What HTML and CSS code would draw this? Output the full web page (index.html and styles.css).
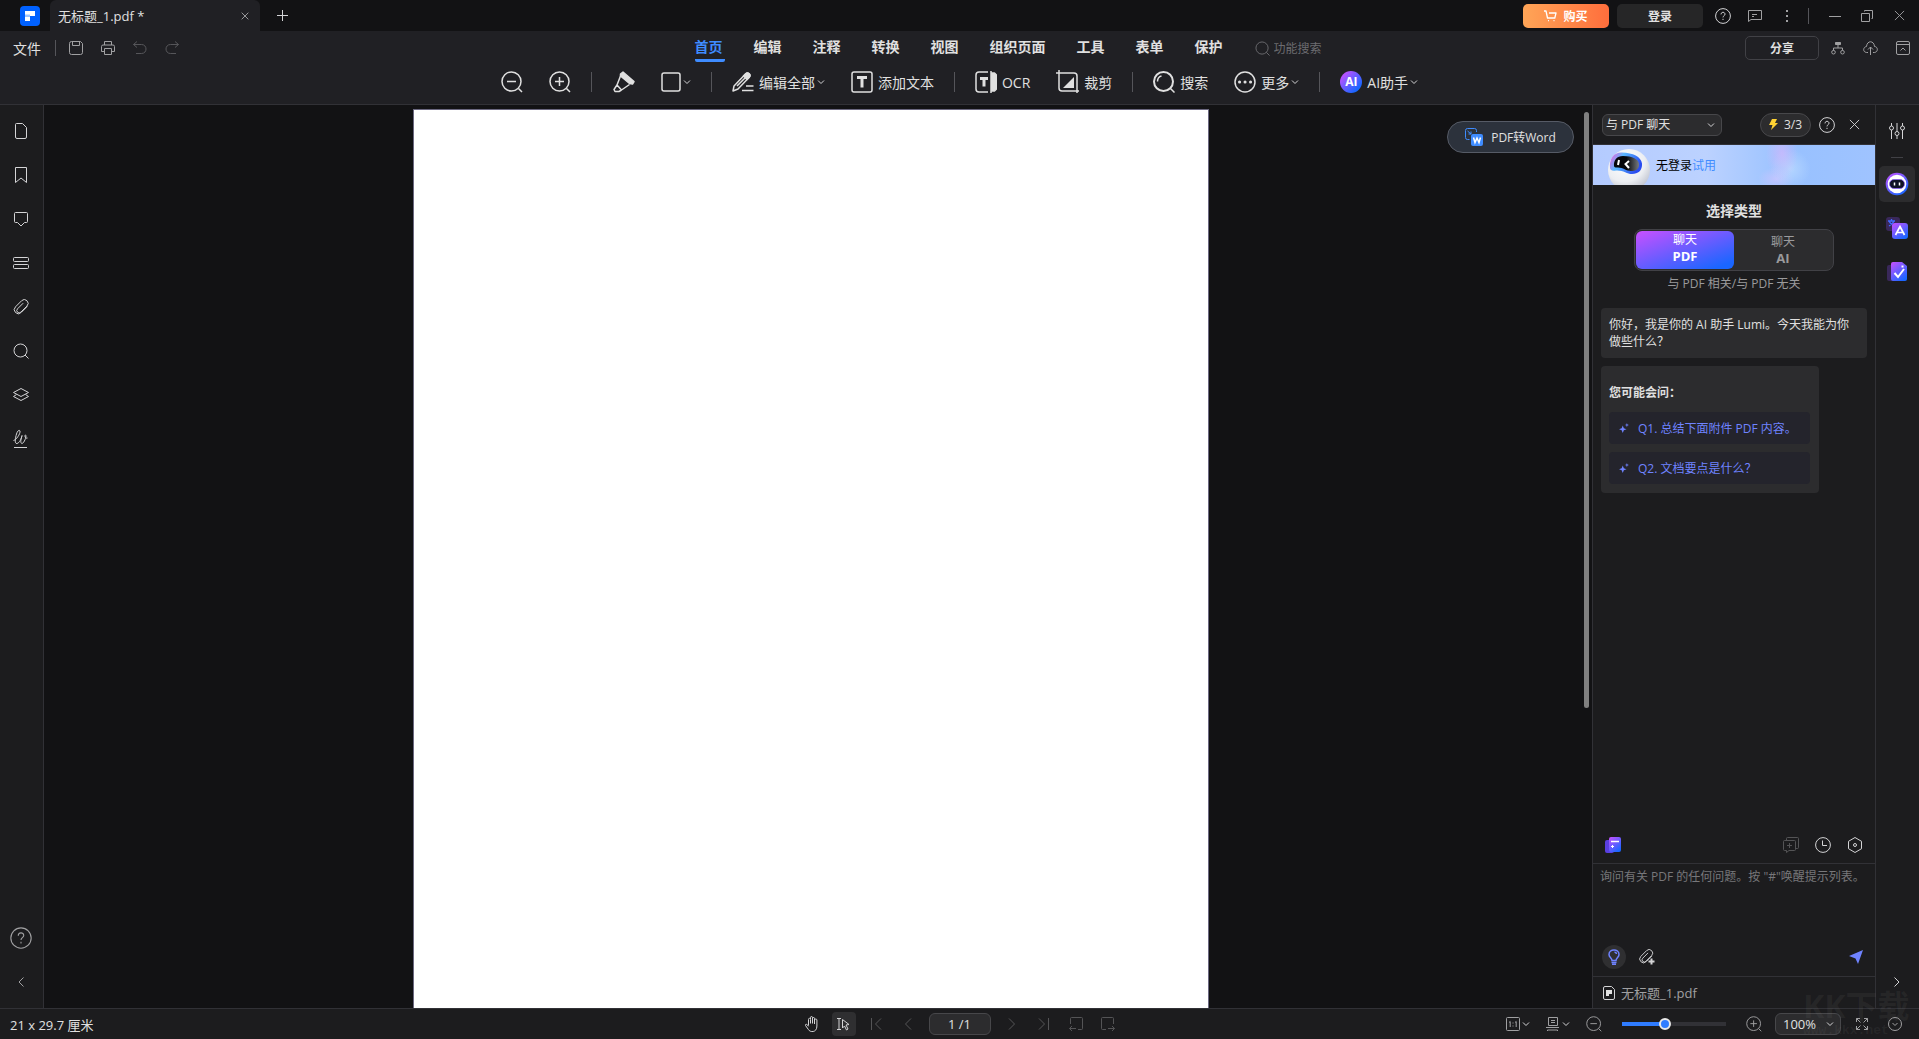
FILE: index.html
```html
<!DOCTYPE html>
<html lang="zh-CN">
<head>
  <meta charset="UTF-8" />
  <meta name="viewport" content="width=device-width, initial-scale=1.0" />
  <title>无标题_1.pdf</title>
  <link rel="stylesheet" href="styles.css">
</head>
<body>

  <!-- Shared icons -->
  <svg class="sprite" width="0" height="0" aria-hidden="true">
    <defs>
      <linearGradient id="violet" x1="0" y1="0" x2="0.7" y2="1">
        <stop offset="0" stop-color="#c950ff" />
        <stop offset="1" stop-color="#1a66ff" />
      </linearGradient>
      <radialGradient id="ball" cx="0.4" cy="0.3" r="0.8">
        <stop offset="0" stop-color="#fff" />
        <stop offset="0.6" stop-color="#eceef2" />
        <stop offset="1" stop-color="#b5b9c6" />
      </radialGradient>
      <linearGradient id="rim" x1="0" y1="0" x2="1" y2="0.4">
        <stop offset="0" stop-color="#ff5ad8" />
        <stop offset="0.4" stop-color="#5ab8ff" />
        <stop offset="1" stop-color="#2a4cf0" />
      </linearGradient>
      <linearGradient id="visor" x1="0" y1="0" x2="1" y2="0">
        <stop offset="0.5" stop-color="#05060a" />
        <stop offset="1" stop-color="#777a80" />
      </linearGradient>
    </defs>
    <symbol id="chevron" viewBox="0 0 8 6"><path d="M1 1.5l3 3 3-3" /></symbol>
    <symbol id="help" viewBox="0 0 16 16">
      <circle cx="8" cy="8" r="7.4" />
      <path d="M6 6.4c0-2.8 4-2.8 4-.2 0 1.5-2 1.6-2 3.2M8 10.8v1.2" />
    </symbol>
    <symbol id="minus-lens" viewBox="0 0 22 22">
      <circle cx="10.5" cy="10.5" r="9.5" /><path d="M6 10.5h9M17.5 17.5l3.5 3.5" />
    </symbol>
    <symbol id="plus-lens" viewBox="0 0 22 22">
      <circle cx="10.5" cy="10.5" r="9.5" /><path d="M6 10.5h9M10.5 6v9M17.5 17.5l3.5 3.5" />
    </symbol>
    <symbol id="lens" viewBox="0 0 16 16"><circle cx="7.5" cy="7.5" r="6.5" /><path d="M12 12l3.5 3.5" /></symbol>
    <symbol id="cross" viewBox="0 0 12 12"><path d="M1 1l10 10M11 1L1 11" /></symbol>
    <symbol id="clip" viewBox="0 0 24 24">
      <path stroke-width="1.5" d="M21.440 11.050l-9.190 9.190a6 6 0 0 1-8.490-8.490l9.190-9.190a5.500 5.500 0 0 1 8 8l-9.200 9.190a3.200 3.200 0 0 1-5-5l8.490-8.480" />
    </symbol>
    <symbol id="sparkle" viewBox="0 0 12 12">
      <path d="M4.500 3l1.300 3.200L9 7.500 5.800 8.800 4.500 12 3.200 8.800 0 7.500l3.200-1.300zM9.500 0l.6 1.900 1.900.6-1.900.6-.6 1.900-.6-1.900L7 2.500l1.900-.6z" />
    </symbol>
  </svg>

  <!-- Title bar with document tabs -->
  <div class="titlebar">
    <svg class="logo" width="20" height="20" viewBox="0 0 20 20">
      <rect width="20" height="20" rx="4" fill="#0061ff" />
      <path d="M5 5h10v5H5z" fill="#fff" /><path d="M5 10h5v5H5z" fill="#fff" /><path d="M5 8.500h5v2.500H5z" fill="#9cc4ff" />
    </svg>
    <div class="doc-tab">
      <span>无标题_1.pdf *</span>
      <button class="icon-btn" aria-label="关闭标签"><svg class="ic" width="8" height="8"><use href="#cross" /></svg></button>
    </div>
    <button class="icon-btn new-tab" aria-label="新建标签"><svg class="ic" width="11" height="11" viewBox="0 0 11 11"><path d="M5.500 0v11M0 5.500h11" /></svg></button>
    <div class="window-tools">
      <button class="buy">
        <svg class="ic" width="13" height="12" viewBox="0 0 13 12"><path d="M0 1h2l1.500 7h7.300L12 3H5M4 10.700h1M9.500 10.700h1" /></svg>
        购买
      </button>
      <button class="login">登录</button>
      <button class="icon-btn" aria-label="帮助"><svg class="ic" width="16" height="16"><use href="#help" /></svg></button>
      <button class="icon-btn" aria-label="反馈"><svg class="ic dim" width="16" height="14" viewBox="0 0 16 14"><path d="M1.500 12.500v-11h13v9H4zM5 5.500h5M5 7.500h2" /></svg></button>
      <button class="icon-btn" aria-label="菜单"><svg class="dots" width="16" height="14" viewBox="0 0 16 14"><path d="M7 1h2v2H7zM7 6h2v2H7zM7 11h2v2H7z" /></svg></button>
      <span class="divider"></span>
      <button class="icon-btn" aria-label="最小化"><svg class="ic dim" width="12" height="12" viewBox="0 0 12 12"><path d="M0 6.500h12" /></svg></button>
      <button class="icon-btn" aria-label="还原"><svg class="ic dim" width="12" height="12" viewBox="0 0 12 12"><path d="M.5 3.500h8v8h-8zM3.500 1.500v-1h8v8h-1" /></svg></button>
      <button class="icon-btn" aria-label="关闭"><svg class="ic dim" width="11" height="11"><use href="#cross" /></svg></button>
    </div>
  </div>

  <!-- Menu row and ribbon -->
  <header class="header">
    <div class="menu-row">
      <div class="quick">
        <button class="file-btn">文件</button>
        <span class="divider"></span>
        <button class="icon-btn" aria-label="保存"><svg class="ic dim" width="14" height="14" viewBox="0 0 14 14"><path d="M2.500.5h9l2 2v9q0 2-2 2h-9q-2 0-2-2v-9q0-2 2-2zM3.500.5v4h7v-4" /></svg></button>
        <button class="icon-btn" aria-label="打印"><svg class="ic dim" width="14" height="14" viewBox="0 0 14 14"><path d="M3.500 4V.5h7V4M3.500 10.500h-3v-5q0-1.500 1.500-1.500h10q1.500 0 1.500 1.500v5h-3M3.500 7.500h7v6h-7z" /></svg></button>
        <button class="icon-btn" aria-label="撤销" disabled><svg class="ic" width="14" height="14" viewBox="0 0 14 14"><path d="M4 .5L.5 3.500 4 6.500M.5 3.500h8c6 0 6 9 0 9H3" /></svg></button>
        <button class="icon-btn" aria-label="重做" disabled><svg class="ic" width="14" height="14" viewBox="0 0 14 14"><path d="M10 .5l3.500 3-3.500 3M13.500 3.500h-8c-6 0-6 9 0 9H11" /></svg></button>
      </div>
      <nav class="menu">
        <a class="active" href="#home">首页</a>
        <a href="#edit">编辑</a>
        <a href="#comment">注释</a>
        <a href="#convert">转换</a>
        <a href="#view">视图</a>
        <a href="#organize">组织页面</a>
        <a href="#tools">工具</a>
        <a href="#form">表单</a>
        <a href="#protect">保护</a>
      </nav>
      <div class="menu-end">
        <label class="feature-search">
          <svg class="ic" width="15" height="15"><use href="#lens" /></svg>
          <input type="text" placeholder="功能搜索" aria-label="功能搜索">
        </label>
        <button class="share">分享</button>
        <button class="icon-btn" aria-label="组织结构"><svg class="ic dim" width="14" height="14" viewBox="0 0 14 14"><path fill="#a0a0a2" d="M4.500 1.500h5v2h-5z" /><path d="M7 4v3M2.500 9.500V7h9v2.500" /><circle cx="2.500" cy="11.200" r="1.800" /><circle cx="11.500" cy="11.200" r="1.800" /></svg></button>
        <button class="icon-btn" aria-label="上传到云"><svg class="ic dim" width="15" height="14" viewBox="0 0 15 14"><path d="M5 11.500H3.500c-4-.5-3.500-5.500 0-6C4-.8 11-.8 11.500 5.500c3.500 0 4 5.500 0 6H10M7.500 14V6M5 8.500L7.500 6 10 8.500" /></svg></button>
        <button class="icon-btn" aria-label="收起功能区"><svg class="ic dim" width="14" height="14" viewBox="0 0 14 14"><rect x=".5" y=".5" width="13" height="13" rx="1.500" /><path d="M.5 3.500h13M4.500 9.500L7 7l2.500 2.500" /></svg></button>
      </div>
    </div>

    <div class="ribbon">
      <button class="tool" aria-label="缩小"><svg class="ic bold" width="22" height="22"><use href="#minus-lens" /></svg></button>
      <button class="tool" aria-label="放大"><svg class="ic bold" width="22" height="22"><use href="#plus-lens" /></svg></button>
      <span class="divider"></span>
      <button class="tool" aria-label="高亮">
        <svg class="ic bold" width="23" height="22" viewBox="0 0 23 22"><path fill="#e0e0e0" d="M11 1l11 9.500-1.500 2.500-3-.5L8.500 5V3z" /><path d="M8.500 5L5 14l4.500 5 8-5.500M5 14l-3 4.500 1 2h4L9.500 19" /></svg>
      </button>
      <button class="tool" aria-label="形状">
        <svg class="ic bold" width="20" height="20" viewBox="0 0 20 20"><rect x="1" y="1" width="18" height="18" rx="2" /></svg>
        <svg class="ic chev" width="8" height="6"><use href="#chevron" /></svg>
      </button>
      <span class="divider"></span>
      <button class="tool">
        <svg class="ic bold" width="22" height="20" viewBox="0 0 22 20"><path d="M2 14L13.500 2c2.500-2.500 6 .8 3.500 3.500L6 17l-5 2z" /><path fill="#e0e0e0" d="M11.500 4l2-2c2.500-2.500 6 .8 3.500 3.500l-2 2z" /><path d="M5 14l8-8M14 14h7.500M10 18.500h11.500" /></svg>
        编辑全部
        <svg class="ic chev" width="8" height="6"><use href="#chevron" /></svg>
      </button>
      <button class="tool">
        <svg class="ic bold" width="22" height="22" viewBox="0 0 22 22"><rect x="1" y="1" width="20" height="20" rx="2" /><path class="thick" d="M6 6.500h10M11 6.500v10" /></svg>
        添加文本
      </button>
      <span class="divider"></span>
      <button class="tool">
        <svg class="ic bold" width="22" height="24" viewBox="0 0 22 24"><path d="M13 2H4Q1 2 1 5v14q0 3 3 3h9" /><path class="thick" d="M5 8.500h8M9 8.500v8" /><path fill="#e0e0e0" d="M16 1v22M17 3h2.500l2 2v14l-2 2H17z" /></svg>
        OCR
      </button>
      <button class="tool">
        <svg class="ic bold" width="23" height="24" viewBox="0 0 23 24"><path d="M0 3h18q3 0 3 3v17M3 0v18q0 3 3 3h17" /><path class="solid" d="M18 7v11H7z" /></svg>
        裁剪
      </button>
      <span class="divider"></span>
      <button class="tool">
        <svg class="ic bold" width="22" height="22" viewBox="0 0 22 22"><circle cx="10.500" cy="10.500" r="9.500" stroke-width="2" /><path d="M4.500 10.500c0-3 2-5 4-5.500M17.500 17.500l4 4" /></svg>
        搜索
      </button>
      <button class="tool">
        <svg class="ic bold" width="22" height="22" viewBox="0 0 22 22"><circle cx="11" cy="11" r="10" /><path class="dots-row" d="M5.500 11h.1M11 11h.1M16.500 11h.1" /></svg>
        更多
        <svg class="ic chev" width="8" height="6"><use href="#chevron" /></svg>
      </button>
      <span class="divider"></span>
      <button class="tool">
        <span class="ai-badge">AI</span>
        AI助手
        <svg class="ic chev" width="8" height="6"><use href="#chevron" /></svg>
      </button>
    </div>
  </header>

  <div class="workspace">
    <!-- Left navigation rail -->
    <aside class="rail left-rail">
      <button class="icon-btn" aria-label="缩略图"><svg class="ic" width="16" height="16" viewBox="0 0 16 16"><path d="M3.500.5h6l4 4v9.500q0 1.500-1.500 1.500H4q-1.500 0-1.500-1.500V1.500q0-1 1-1z" /></svg></button>
      <button class="icon-btn" aria-label="书签"><svg class="ic" width="16" height="16" viewBox="0 0 16 16"><path d="M2.500 15.500v-15h11v15L8 11z" /></svg></button>
      <button class="icon-btn" aria-label="注释"><svg class="ic" width="16" height="16" viewBox="0 0 16 16"><path d="M2.500 1.500h11q1 0 1 1v8q0 1-1 1h-2L8 15l-3.500-3.500h-2q-1 0-1-1v-8q0-1 1-1z" /></svg></button>
      <button class="icon-btn" aria-label="字段"><svg class="ic" width="16" height="16" viewBox="0 0 16 16"><rect x=".5" y="2.500" width="15" height="4" rx="1" /><rect x=".5" y="9.500" width="15" height="4" rx="1" /></svg></button>
      <button class="icon-btn" aria-label="附件"><svg class="ic" width="16" height="16"><use href="#clip" /></svg></button>
      <button class="icon-btn" aria-label="搜索"><svg class="ic" width="16" height="16"><use href="#lens" /></svg></button>
      <button class="icon-btn" aria-label="图层"><svg class="ic" width="16" height="16" viewBox="0 0 16 16"><path d="M8 1.500l7.500 4L8 9.500l-7.500-4zM3.500 7.500l-3 2 7.500 4 7.500-4-3-2" /></svg></button>
      <button class="icon-btn" aria-label="签名"><svg class="ic" width="16" height="20" viewBox="0 0 16 20"><path d="M.5 11.500C3 11 7.500 5 7 2 6.500.5 4.500 1.500 3.500 5 2 10 1.500 15 4 14.500c2.500-.5 4.500-5 5-8-1 3.500-2 7.500-.2 8 1.500.3 4-4.500 4.200-7.500.2-1.500-1.500-1-1 .5.300 1.500 1.500 2 2.500 1.500M1 18.500h13" /></svg></button>
      <span class="spacer"></span>
      <button class="icon-btn large" aria-label="帮助"><svg class="ic dim" width="22" height="22"><use href="#help" /></svg></button>
      <button class="icon-btn" aria-label="收起"><svg class="ic dim" width="6" height="10" viewBox="0 0 6 10"><path d="M5.500.5L1 5l4.500 4.500" /></svg></button>
    </aside>

    <!-- Document canvas -->
    <main class="canvas">
      <div class="page"></div>
      <button class="to-word">
        <svg width="18" height="18" viewBox="0 0 18 18"><path d="M4.500 11.500h-2q-2 0-2-2v-7q0-2 2-2h7q2 0 2 2v1.500M2.500 3l3.500 3M6 3.500V6H3.500" fill="none" stroke="#3f8cff" /><rect x="6" y="6" width="12" height="12" rx="2" fill="#3f8cff" /><path d="M8.500 9.500l1.500 5 2-4.500 2 4.500 1.500-5" fill="none" stroke="#fff" stroke-width="1.500" /></svg>
        PDF转Word
      </button>
      <div class="scroll-thumb"></div>
    </main>

    <!-- AI chat panel -->
    <section class="chat">
      <div class="chat-head">
        <div class="select-wrap mode">
          <select aria-label="聊天模式"><option>与 PDF 聊天</option></select>
          <svg class="ic" width="8" height="6"><use href="#chevron" /></svg>
        </div>
        <span class="quota">
          <svg width="9" height="11" viewBox="0 0 9 11"><path d="M3 0h5L6 4h3L2 11l1.500-5H0z" fill="#ffd233" /></svg>
          3/3
        </span>
        <button class="icon-btn" aria-label="帮助"><svg class="ic" width="16" height="16"><use href="#help" /></svg></button>
        <button class="icon-btn" aria-label="关闭面板"><svg class="ic" width="11" height="11"><use href="#cross" /></svg></button>
      </div>

      <div class="banner">
        <svg class="bot" width="44" height="36" viewBox="0 0 44 36">
          <circle cx="23" cy="21" r="21" fill="url(#ball)" />
          <path d="M4 19C3 10 8 3 16 3.500c11 .5 19 4 20 11 .5 7-4 10.500-10 10.500-5 0-9-4-16-3.500-4 .5-5.500 0-6-2.500z" fill="url(#rim)" />
          <path d="M8 17C7.500 11 11 7 17 7c9 0 16 3 16 8.500 0 5-3.500 6.500-8 6.500s-8-3.500-13-3.500c-2.500 0-3.700.2-4-1.500z" fill="url(#visor)" />
          <path d="M13 11l-1 5M23 12l-3.500 3 3.500 4" fill="none" stroke="#fff" stroke-width="2" />
        </svg>
        <span>无登录<a href="#trial">试用</a></span>
      </div>

      <div class="chat-body">
        <h2>选择类型</h2>
        <div class="segment">
          <button class="on">聊天<b>PDF</b></button>
          <button>聊天<b>AI</b></button>
        </div>
        <p class="hint">与 PDF 相关/与 PDF 无关</p>

        <p class="bubble">你好，我是你的 AI 助手 Lumi。今天我能为你做些什么？</p>

        <div class="ask">
          <h3>您可能会问：</h3>
          <button><svg width="10" height="12"><use href="#sparkle" /></svg>Q1. 总结下面附件 PDF 内容。</button>
          <button><svg width="10" height="12"><use href="#sparkle" /></svg>Q2. 文档要点是什么？</button>
        </div>
      </div>

      <div class="chat-tools">
        <button class="icon-btn library" aria-label="提示库"><svg width="16" height="16" viewBox="0 0 16 16"><rect y="3" width="9" height="13" rx="2" fill="#5a3fe0" /><rect x="4" width="12" height="15" rx="2" fill="url(#violet)" /><path d="M6 4.500h8" stroke="#fff" stroke-width="1.500" /><path d="M7.500 8v3M6 9.500h3" stroke="#fff" /></svg></button>
        <button class="icon-btn" aria-label="新对话" disabled><svg class="ic" width="16" height="16" viewBox="0 0 16 16"><path d="M3.500 3V1.500q0-1 1-1h10q1 0 1 1v9q0 1-1 1h-1.500M1.500 3.500h10q1 0 1 1v8q0 1-1 1H6L3.500 15.500v-2h-2q-1 0-1-1v-8q0-1 1-1zM6.500 6v5M4 8.500h5" /></svg></button>
        <button class="icon-btn" aria-label="历史"><svg class="ic" width="16" height="16" viewBox="0 0 16 16"><circle cx="8" cy="8" r="7.400" /><path d="M7.500 3.500v5H12" /></svg></button>
        <button class="icon-btn" aria-label="设置"><svg class="ic" width="16" height="16" viewBox="0 0 16 16"><path d="M8 .5l6.500 3.800v7.400L8 15.500l-6.500-3.800V4.300z" /><circle cx="8" cy="8" r="1.500" /></svg></button>
      </div>

      <div class="prompt">
        <textarea aria-label="提问" placeholder="询问有关 PDF 的任何问题。按 &quot;#&quot;唤醒提示列表。"></textarea>
        <div class="prompt-tools">
          <button class="icon-btn idea" aria-label="灵感"><svg width="12" height="16" viewBox="0 0 12 16" fill="none" stroke="#6f83ff" stroke-width="1.500"><path d="M4 11.500C4 9 1 8.500 1 5.500c0-6 10-6 10 0 0 3-3 3.500-3 6zM3.500 13.500l5 0M4 15.200h4M6.500 3q2 .3 2 2" /></svg></button>
          <button class="icon-btn" aria-label="添加附件"><svg class="ic" width="17" height="16" viewBox="0 0 17 16"><use href="#clip" width="16" height="15" /><path class="plus" d="M13.500 9.500v6M10.500 12.500h6" /></svg></button>
          <button class="icon-btn send" aria-label="发送"><svg width="14" height="14" viewBox="0 0 14 14"><path d="M14 0L9 14 6.500 8.500 0 6z" fill="#6f83ff" /></svg></button>
        </div>
      </div>

      <div class="chat-file">
        <svg class="ic" width="12" height="14" viewBox="0 0 12 14"><path d="M2 .5h6.500l3 3V12q0 1.500-1.500 1.500H2Q.5 13.500.5 12V2Q.5.5 2 .5z" /><path class="solid" d="M3 4h6v4H6v2H3z" /></svg>
        无标题_1.pdf
      </div>
    </section>

    <!-- Right rail -->
    <aside class="rail right-rail">
      <button class="icon-btn" aria-label="属性"><svg class="ic" width="16" height="16" viewBox="0 0 16 16"><path d="M2.500 0v3M2.500 7v9M8 0v8.500M8 12.500V16M13.500 0v3M13.500 7v9" /><circle cx="2.500" cy="5" r="2" /><circle cx="8" cy="10.500" r="2" /><circle cx="13.500" cy="5" r="2" /></svg></button>
      <hr>
      <button class="icon-btn current" aria-label="AI 助手"><svg width="24" height="24" viewBox="0 0 24 24"><circle cx="12" cy="12" r="11.300" fill="url(#violet)" /><circle cx="12" cy="12" r="9.300" fill="#fff" /><rect x="4.500" y="7.500" width="15" height="9" rx="4.500" fill="#101225" stroke="#8a5cff" stroke-width=".7" /><path d="M9.500 10.500v3M14.500 10.500v3" stroke="#fff" stroke-width="1.500" /></svg></button>
      <button class="icon-btn" aria-label="翻译"><svg width="22" height="22" viewBox="0 0 22 22"><rect width="14" height="14" rx="3" fill="#39285a" /><path d="M2 4h7M5.500 2v2M8 4c-1 3-3 4-5 5M3 4c1 3 3 4 5 5" fill="none" stroke="#406bff" stroke-width="1.300" /><rect x="6" y="6" width="16" height="16" rx="3" fill="url(#violet)" /><path d="M9.500 18L14 9.500 18.500 18M11 15.500h6" fill="none" stroke="#fff" stroke-width="1.700" /></svg></button>
      <button class="icon-btn" aria-label="校对"><svg width="20" height="20" viewBox="0 0 20 20"><rect y="3" width="10" height="16" rx="2" fill="#39285a" /><path d="M6 0h9l5 4v13q0 2-2 2H6q-2 0-2-2V2q0-2 2-2z" fill="url(#violet)" /><path d="M7.500 11l3.500 4 6-8M14.500 4.500h2" fill="none" stroke="#fff" stroke-width="2" /></svg></button>
      <span class="spacer"></span>
      <button class="icon-btn" aria-label="展开"><svg class="ic" width="6" height="10" viewBox="0 0 6 10"><path d="M.5.5L5 5 .5 9.500" /></svg></button>
    </aside>
  </div>

  <!-- Status bar -->
  <footer class="status">
    <span class="size">21 x 29.7 厘米</span>
    <div class="pager">
      <button class="icon-btn" aria-label="手形工具"><svg class="ic" width="14" height="16" viewBox="0 0 14 16"><path d="M3.500 9.500V3.500q0-1.200 1-1.200t1 1.200V7.500M5.500 3V1.700q0-1.200 1-1.200t1 1.200V7.500M7.500 2.500q0-1 1-1t1 1V8M9.500 4q0-1 1.200-1t1.200 1v6c0 7-7 6.500-8.500 3.500L.5 9.500c-.5-1.500 1.500-2 3 .8" /></svg></button>
      <button class="icon-btn picked" aria-label="选择工具"><svg class="ic" width="13" height="14" viewBox="0 0 13 14"><path d="M0 1.500h4M2 1.500v11M0 12.500h4" /><path d="M5.500 2.500l6.500 5-3 .5 2 4-1.500 1-2-4-2 2z" /></svg></button>
      <button class="icon-btn" aria-label="首页" disabled><svg class="ic" width="12" height="12" viewBox="0 0 12 12"><path d="M1.500 0v12M11 .5L5.500 6l5.500 5.500" /></svg></button>
      <button class="icon-btn" aria-label="上一页" disabled><svg class="ic" width="12" height="12" viewBox="0 0 12 12"><path d="M9 .5L3.500 6 9 11.500" /></svg></button>
      <input class="page-no" type="text" value="1 /1" aria-label="页码">
      <button class="icon-btn" aria-label="下一页" disabled><svg class="ic" width="12" height="12" viewBox="0 0 12 12"><path d="M3 .5L8.500 6 3 11.500" /></svg></button>
      <button class="icon-btn" aria-label="末页" disabled><svg class="ic" width="12" height="12" viewBox="0 0 12 12"><path d="M10.500 0v12M1 .5L6.500 6 1 11.500" /></svg></button>
      <button class="icon-btn" aria-label="上一视图" disabled><svg class="ic" width="14" height="14" viewBox="0 0 14 14"><path d="M1.500 7V1.500q0-1 1-1h10q1 0 1 1v10q0 1-1 1H9M7 11.500H.5M3 9L.5 11.500 3 14" /></svg></button>
      <button class="icon-btn" aria-label="下一视图" disabled><svg class="ic" width="14" height="14" viewBox="0 0 14 14"><path d="M12.500 7V1.500q0-1-1-1h-10q-1 0-1 1v10q0 1 1 1H5M7 11.500h6.500M11 9l2.500 2.500L11 14" /></svg></button>
    </div>
    <div class="zoom">
      <button class="icon-btn" aria-label="实际大小">
        <svg class="ic dim" width="14" height="14" viewBox="0 0 14 14"><rect x=".5" y=".5" width="13" height="13" rx="1" /><path d="M3 5.500l1.200-1V10M9 5.500l1.200-1V10M7 5.500v1M7 8.500v1" /></svg>
        <svg class="ic" width="8" height="6"><use href="#chevron" /></svg>
      </button>
      <button class="icon-btn" aria-label="页面布局">
        <svg class="ic dim" width="14" height="14" viewBox="0 0 14 14"><path d="M2.500.5h9v8h-9zM5 3.500h4M5 5.500h4M0 10.500h13M1.500 14v-1h10v1" /></svg>
        <svg class="ic" width="8" height="6"><use href="#chevron" /></svg>
      </button>
      <button class="icon-btn lens" aria-label="缩小"><svg class="ic dim" width="16" height="16"><use href="#minus-lens" /></svg></button>
      <input class="slider" type="range" min="0" max="100" value="40" aria-label="缩放">
      <button class="icon-btn lens" aria-label="放大"><svg class="ic dim" width="16" height="16"><use href="#plus-lens" /></svg></button>
      <div class="select-wrap percent">
        <select aria-label="缩放比例"><option>100%</option></select>
        <svg class="ic" width="8" height="6"><use href="#chevron" /></svg>
      </div>
      <button class="icon-btn" aria-label="全屏"><svg class="ic dim" width="12" height="12" viewBox="0 0 12 12"><path d="M4 .5H.5V4M.5.5L4.500 4.500M8 .5h3.500V4M11.500.5L7.500 4.500M4 11.500H.5V8M.5 11.500L4.500 7.500M8 11.500h3.500V8M11.500 11.500L7.500 7.500" /></svg></button>
      <button class="icon-btn" aria-label="更多选项"><svg class="ic dim" width="14" height="14" viewBox="0 0 14 14"><circle cx="7" cy="7" r="6.500" /><path d="M4.500 6L7 8.500 9.500 6" /></svg></button>
    </div>
  </footer>

  <div class="watermark"><span class="mark">KK下载</span><span class="site">www.kkx.net</span></div>

</body>
</html>
```

FILE: styles.css
```css
/* Global reset and font settings */
* { box-sizing: border-box; }
body, html {
  margin: 0;
  padding: 0;
  height: 100%;
}
body {
  display: flex;
  flex-direction: column;
  overflow: hidden;
  font-family: "Open Sans", "Noto Sans CJK SC", sans-serif;
  font-size: 12px;
  background-color: #121214;
  color: #e0e0e0;
}
button, input, select, textarea {
  font-family: inherit;
  font-size: inherit;
  color: inherit;
  margin: 0;
}
button {
  padding: 0;
  border: none;
  background: none;
  white-space: nowrap;
}
svg { display: block; flex: none; }
a { text-decoration: none; color: inherit; }

/* Icons */
.sprite { position: absolute; }
.ic {
  fill: none;
  stroke: #d4d4d6;
  stroke-linejoin: round;
}
.ic.dim { stroke: #a0a0a2; }
.ic.bold { stroke: #e0e0e0; stroke-width: 1.5; }
.ic .thick { stroke-width: 3; stroke-linejoin: miter; }
.ic .solid { fill: #e0e0e0; stroke: none; }
.ic .dots-row { stroke-width: 3; stroke-linecap: round; }
.ic .plus { stroke-width: 2; }
.dots { fill: #a0a0a2; }
.icon-btn {
  display: flex;
  align-items: center;
  justify-content: center;
  gap: 2px;
}
.icon-btn:disabled { opacity: 0.3; }
.divider {
  width: 1px;
  height: 16px;
  background-color: #55555a;
}
.spacer { flex: 1; }

/* Title bar */
.titlebar {
  display: flex;
  align-items: center;
  height: 31px;
  padding-left: 20px;
}
.doc-tab {
  display: flex;
  align-items: center;
  justify-content: space-between;
  width: 210px;
  height: 31px;
  margin-left: 10px;
  padding: 0 11px 0 8px;
  border-radius: 6px 6px 0 0;
  background-color: #202024;
  font-size: 13px;
}
.new-tab { margin-left: 17px; }
.window-tools {
  display: flex;
  align-items: center;
  gap: 16px;
  margin-left: auto;
  padding-right: 12px;
}
.window-tools .icon-btn { width: 16px; }
.window-tools .divider { margin: 0 2px 0 -3px; }
.buy, .login {
  display: flex;
  align-items: center;
  justify-content: center;
  gap: 6px;
  width: 86px;
  height: 24px;
  border-radius: 5px;
  font-weight: bold;
  background-color: #262627;
}
.buy {
  margin-right: -8px;
  color: #fff;
  background: linear-gradient(90deg, #ffa557, #ff6e3c);
}
.buy .ic { stroke: #fff; stroke-width: 1.3; }
.login { margin-right: -4px; }

/* Menu row */
.header {
  height: 74px;
  border-bottom: 1px solid #313136;
  background-color: #202024;
}
.menu-row {
  display: grid;
  grid-template-columns: 1fr auto 1fr;
  align-items: center;
  height: 34px;
}
.quick {
  display: flex;
  align-items: center;
  gap: 18px;
  padding-left: 13px;
}
.file-btn { font-size: 14px; }
.quick .divider { margin: 0 -5px; }
.quick .file-btn { margin-right: 1px; }
.menu {
  display: flex;
  gap: 29px;
  font-size: 14px;
  font-weight: bold;
}
.menu a {
  height: 28px;
  padding-right: 2px;
  line-height: 26px;
  border-bottom: 3px solid transparent;
}
.menu .active { color: #3f8cff; border-color: #3f8cff; border-radius: 2px; }
.menu-end {
  display: flex;
  align-items: center;
  gap: 18px;
  padding: 0 9px 0 30px;
}
.feature-search {
  display: flex;
  align-items: center;
  gap: 4px;
  margin-right: auto;
}
.feature-search .ic { stroke: #6c6c70; }
.feature-search input {
  width: 120px;
  padding: 0;
  border: none;
  background: none;
}
.feature-search input::placeholder { color: #6c6c70; }
.share {
  width: 74px;
  height: 24px;
  margin-right: -6px;
  border: 1px solid #414146;
  border-radius: 5px;
  font-weight: bold;
}

/* Ribbon */
.ribbon {
  display: flex;
  align-items: center;
  justify-content: center;
  gap: 26px;
  height: 34px;
}
.ribbon .divider { height: 20px; margin: 0 -6px; }
.tool {
  display: flex;
  align-items: center;
  gap: 5px;
  font-size: 14px;
}
.tool .chev { margin-left: -3px; }
.ai-badge {
  width: 22px;
  height: 22px;
  border-radius: 50%;
  background: linear-gradient(135deg, #c950ff 10%, #1a66ff 80%);
  color: #fff;
  font-size: 12px;
  font-weight: bold;
  line-height: 22px;
}

/* Workspace */
.workspace {
  flex: 1;
  display: flex;
  min-height: 0;
}
.rail {
  display: flex;
  flex-direction: column;
  align-items: center;
  width: 44px;
  background-color: #1c1c1e;
}
.left-rail {
  padding: 4px 1px 4px 0;
  border-right: 1px solid #313136;
}
.left-rail .icon-btn { height: 44px; }
.left-rail .large .ic { stroke-width: 0.8; }
.canvas {
  flex: 1;
  position: relative;
  display: flex;
  justify-content: center;
  padding: 4px 14px 0 0;
  overflow: hidden;
}
.page {
  width: 796px;
  height: 1123px;
  border: 1px solid #6b6880;
  background-color: #fff;
}
.to-word {
  position: absolute;
  top: 16px;
  right: 18px;
  display: flex;
  align-items: center;
  justify-content: center;
  gap: 8px;
  width: 127px;
  height: 32px;
  border: 1px solid #565b66;
  border-radius: 16px;
  background-color: #2c323c;
}
.scroll-thumb {
  position: absolute;
  top: 7px;
  right: 3px;
  width: 5px;
  height: 66%;
  border-radius: 3px;
  background-color: #808080;
}

/* Chat panel */
.chat {
  display: flex;
  flex-direction: column;
  width: 284px;
  border: solid #313136;
  border-width: 0 1px;
  background-color: #1c1c1e;
}
.chat-head {
  display: flex;
  align-items: center;
  gap: 8px;
  height: 40px;
  padding: 0 15px 0 9px;
  border-bottom: 1px solid #313136;
}
.chat-head .icon-btn:last-child { margin-left: 6px; }
.select-wrap {
  position: relative;
  height: 22px;
}
.select-wrap select {
  appearance: none;
  width: 100%;
  height: 100%;
  padding: 0 3px;
  border: 1px solid #47474a;
  border-radius: 6px;
  background-color: #2c2c2e;
}
.select-wrap .ic {
  position: absolute;
  top: 8px;
  right: 7px;
  pointer-events: none;
}
.mode { width: 120px; margin-right: auto; }
.quota {
  display: flex;
  align-items: center;
  justify-content: center;
  gap: 6px;
  width: 51px;
  height: 24px;
  border: 1px solid #47474a;
  border-radius: 12px;
  background-color: #2c2c2e;
}
.banner {
  position: relative;
  height: 40px;
  padding-left: 63px;
  overflow: hidden;
  line-height: 42px;
  color: #000;
  background:
    radial-gradient(ellipse 16px 26px at 67% 20%, #dcb4fb99, transparent),
    radial-gradient(ellipse 20px 20px at 70% 60%, #c6e2ff99, transparent),
    radial-gradient(ellipse 18px 12px at 65% 85%, #d9c4ff99, transparent),
    linear-gradient(90deg, #b4cbff, #bcd2ff 40%, #98c1ff 70%, #9fc3ff);
}
.banner a { color: #3f8cff; }
.bot { position: absolute; top: 4px; left: 13px; }
.chat-body {
  flex: 1;
  padding: 16px 8px 0;
}
.chat-body h2 {
  margin: 0 0 8px;
  font-size: 14px;
  line-height: 20px;
  text-align: center;
}
.segment {
  display: flex;
  width: 200px;
  height: 42px;
  margin: 0 auto;
  padding: 1px;
  border: 1px solid #414146;
  border-radius: 8px;
  background-color: #2c2c2e;
}
.segment button {
  flex: 1;
  border-radius: 6px;
  line-height: 17px;
  color: #9a9a9c;
}
.segment .on {
  padding-bottom: 4px;
  color: #fff;
  background: linear-gradient(160deg, #c950ff, #1a66ff 90%);
}
.segment b { display: block; font-size: 13px; }
.hint {
  margin: 5px 0 16px;
  line-height: 16px;
  text-align: center;
  color: #9a9a9c;
}
.bubble {
  margin: 0 0 8px;
  padding: 8px 7px 8px 8px;
  border-radius: 4px;
  line-height: 17px;
  background-color: #2c2c2e;
}
.ask {
  display: flex;
  flex-direction: column;
  gap: 8px;
  width: 218px;
  padding: 18px 9px 9px 8px;
  border-radius: 4px;
  background-color: #2c2c2e;
}
.ask h3 {
  margin: 0 0 2px;
  font-size: 12px;
  line-height: 18px;
}
.ask button {
  display: flex;
  align-items: center;
  gap: 9px;
  height: 32px;
  padding-left: 10px;
  border-radius: 4px;
  color: #6f83ff;
  background-color: #24242c;
}
.ask svg { fill: #6f83ff; }
.chat-tools {
  display: flex;
  align-items: center;
  gap: 16px;
  height: 37px;
  padding: 0 12px;
}
.library { margin-right: auto; }
.prompt {
  display: flex;
  flex-direction: column;
  height: 113px;
  border-top: 1px solid #313136;
}
.prompt textarea {
  flex: 1;
  padding: 4px 7px;
  border: none;
  resize: none;
  background: none;
  line-height: 17px;
}
.prompt textarea::placeholder { color: #77777a; }
.prompt-tools {
  display: flex;
  align-items: center;
  gap: 12px;
  padding: 0 12px 7px 9px;
}
.idea {
  width: 24px;
  height: 24px;
  border-radius: 50%;
  background-color: #2f2f31;
}
.send { margin-left: auto; }
.chat-file {
  display: flex;
  align-items: center;
  gap: 6px;
  height: 32px;
  padding-left: 10px;
  border-top: 1px solid #313136;
  color: #a0a0a2;
  font-size: 13px;
}

/* Right rail */
.right-rail { padding: 8px 2px 4px 0; width: 43px; }
.right-rail .icon-btn { width: 36px; height: 36px; margin-bottom: 8px; }
.right-rail .icon-btn:last-child { margin-bottom: 4px; }
.right-rail hr {
  width: 12px;
  margin: 0 0 8px;
  border: none;
  border-top: 1px solid #414146;
}
.right-rail .current { border-radius: 5px; background-color: #2c2c2e; }

/* Status bar */
.status {
  display: grid;
  grid-template-columns: 1fr auto 1fr;
  align-items: center;
  height: 31px;
  border-top: 1px solid #313136;
  background-color: #1c1c1e;
  font-size: 13px;
}
.size { padding-left: 10px; }
.pager {
  display: flex;
  align-items: center;
  gap: 18px;
}
.pager .icon-btn { width: 14px; }
.pager .picked {
  width: 24px;
  height: 24px;
  margin: 0 -5px;
  border-radius: 4px;
  background-color: #2f2f31;
}
.page-no {
  width: 62px;
  height: 22px;
  margin: 0 -4px;
  padding: 0;
  border: 1px solid #47474a;
  border-radius: 6px;
  background-color: #2c2c2e;
  text-align: center;
}
.zoom {
  display: flex;
  align-items: center;
  justify-content: flex-end;
  gap: 16px;
  padding-right: 17px;
}
.lens .ic { stroke-width: 1.3; }
.slider {
  appearance: none;
  width: 104px;
  height: 12px;
  margin: 0 4px;
  background: linear-gradient(90deg, #2f7cff 40%, #313136 40%) center / 100% 4px no-repeat;
}
.slider::-webkit-slider-thumb {
  appearance: none;
  width: 12px;
  height: 12px;
  border: 2px solid #e8e8e8;
  border-radius: 50%;
  background-color: #2f7cff;
}
.percent { width: 66px; margin: 0 -1px 0 -3px; }
.percent select { padding: 0 7px; font-size: 13px; }
.zoom .icon-btn:last-child { margin-left: 4px; }

/* Watermark over the corner */
.watermark {
  position: absolute;
  right: 0;
  bottom: 0;
  display: flex;
  flex-direction: column;
  width: 116px;
  color: #8888881a;
  font-weight: bold;
  pointer-events: none;
}
.mark { font-size: 32px; line-height: 34px; white-space: nowrap; }
.site {
  font-family: "Liberation Mono", monospace;
  font-size: 13px;
  line-height: 16px;
}
```
